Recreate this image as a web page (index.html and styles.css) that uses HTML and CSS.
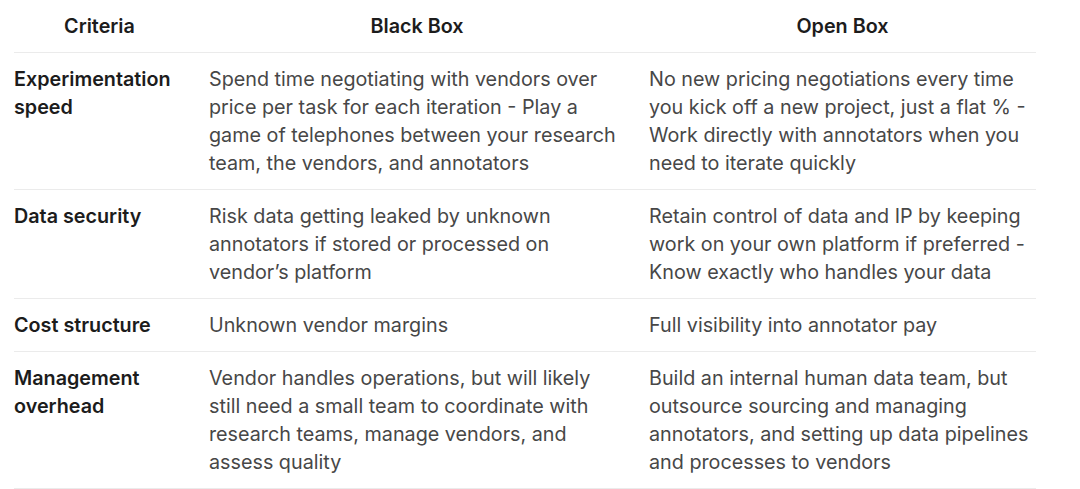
FILE: index.html
```html
<!DOCTYPE html>
<html lang="en">
<head>
<meta charset="utf-8">
<title>Black Box vs Open Box</title>
<link rel="stylesheet" href="styles.css">
</head>
<body>
<table class="compare">
  <colgroup>
    <col class="col-criteria">
    <col class="col-black">
    <col class="col-open">
  </colgroup>
  <thead>
    <tr>
      <th>Criteria</th>
      <th>Black Box</th>
      <th>Open Box</th>
    </tr>
  </thead>
  <tbody>
    <tr>
      <td class="crit">Experimentation speed</td>
      <td>Spend time negotiating with vendors over price per task for each iteration - Play a game of telephones between your research team, the vendors, and annotators</td>
      <td>No new pricing negotiations every time you kick off a new project, just a flat % - Work directly with annotators when you need to iterate quickly</td>
    </tr>
    <tr>
      <td class="crit">Data security</td>
      <td>Risk data getting leaked by unknown annotators if stored or processed on vendor’s platform</td>
      <td>Retain control of data and IP by keeping work on your own platform if preferred - Know exactly who handles your data</td>
    </tr>
    <tr>
      <td class="crit">Cost structure</td>
      <td>Unknown vendor margins</td>
      <td>Full visibility into annotator pay</td>
    </tr>
    <tr>
      <td class="crit">Management overhead</td>
      <td>Vendor handles operations, but will likely still need a small team to coordinate with research teams, manage vendors, and assess quality</td>
      <td>Build an internal human data team, but outsource sourcing and managing annotators, and setting up data pipelines and processes to vendors</td>
    </tr>
  </tbody>
</table>
</body>
</html>
```

FILE: styles.css
```css
html, body {
  margin: 0;
  padding: 0;
  background: #ffffff;
}

body {
  padding-left: 14px;
  font-family: Inter, "Noto Sans", sans-serif;
  font-size: 19.75px;
  line-height: 28px;
  color: #474747;
}

.compare {
  width: 1022px;
  border-collapse: collapse;
  table-layout: fixed;
}

.col-criteria { width: 195px; }
.col-black { width: 440px; }
.col-open { width: 387px; }

.compare th,
.compare td {
  padding: 12px 24px 12px 0;
  text-align: left;
  vertical-align: top;
  border-bottom: 1px solid #ebebeb;
}

.compare th:last-child,
.compare td:last-child {
  padding-right: 0;
}

.compare th {
  text-align: center;
  font-weight: 600;
  color: #1c1c1c;
}

.compare td.crit {
  font-weight: 600;
  color: #1c1c1c;
}
```
